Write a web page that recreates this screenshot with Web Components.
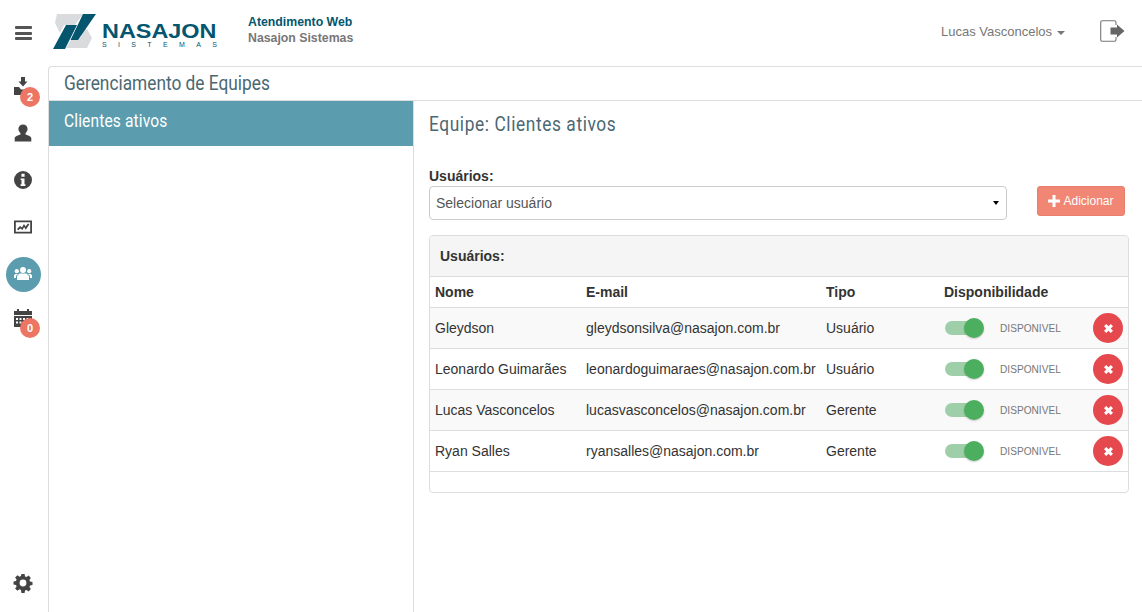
<!DOCTYPE html>
<html lang="pt-BR">
<head>
<meta charset="utf-8">
<title>Gerenciamento de Equipes</title>
<style>
  html, body { margin: 0; height: 100%; background: #fff; overflow: hidden; }
  body { font: 14px "Liberation Sans", Arial, sans-serif; color: #333; }
</style>
</head>
<body>
<nx-app>
  <nx-header slot="header"></nx-header>
  <nx-sidebar slot="sidebar"></nx-sidebar>
  <nx-page slot="main" heading="Gerenciamento de Equipes">
    <nx-team-list slot="list"></nx-team-list>
    <nx-team-detail slot="detail" team="Clientes ativos">
      <nx-user-row name="Gleydson" email="gleydsonsilva@nasajon.com.br" kind="Usuário" odd></nx-user-row>
      <nx-user-row name="Leonardo Guimarães" email="leonardoguimaraes@nasajon.com.br" kind="Usuário"></nx-user-row>
      <nx-user-row name="Lucas Vasconcelos" email="lucasvasconcelos@nasajon.com.br" kind="Gerente" odd></nx-user-row>
      <nx-user-row name="Ryan Salles" email="ryansalles@nasajon.com.br" kind="Gerente"></nx-user-row>
    </nx-team-detail>
  </nx-page>
</nx-app>

<script>
// tiny helper so every element below reads the same
function shadow(el, html) {
  const root = el.attachShadow({ mode: 'open' });
  root.innerHTML = html;
  return root;
}

const ICONS = {
  import: '<path d="M7 -1h4v4.500h2.500L9 8.500 4.500 3.500H7z"/><path d="M0 9h5l2 2.500h4l2 0V17H0z"/>',
  user: '<circle cx="9" cy="5" r="4.600"/><path d="M6.500 9h5v1.600c2.400.9 5.800 1.800 5.800 3.600V17.600H.7v-3.400c0-1.800 3.400-2.700 5.800-3.600z"/>',
  info: '<path fill-rule="evenodd" d="M9 0a9 9 0 1 1 0 18A9 9 0 0 1 9 0zM7.400 2.800v3h3.200v-3zM6.600 7.400v1.600h.9v4.200h-.9v1.900h4.800v-1.900h-.9V7.400z"/>',
  chart: '<path fill-rule="evenodd" d="M0 2.500h18v13H0zM1.800 4.300v9.400h14.400V4.300z"/><path d="M3 11l3-3 2 1.500 2-3.500 1.500 2.500L14 5.500l1.300.8-3.500 5.500-1.700-2.700-1.600 2.900-2.200-1.600-2 1.900z"/>',
  group: '<circle cx="10" cy="5" r="3"/><path d="M6.500 8.500h7l2.500 2.500v4H4v-4z"/><circle cx="3.800" cy="6.200" r="2.100"/><circle cx="16.200" cy="6.200" r="2.100"/><path d="M1 13V10.200l1.300-1.300h2.700L3 10.700V13zM19 13V10.200l-1.300-1.300H15l2 1.800V13z"/>',
  calendar: '<path fill-rule="evenodd" d="M3 0h2v2h8V0h2v2h3v4H0V2h3zM0 7h18v11H0zM2 9v2h2V9zm3.500 0v2h2V9zm3.500 0v2h2V9zm3.500 0v2h2V9zM2 12.500v2h2v-2zm3.500 0v2h2v-2zm3.500 0v2h2v-2zm3.500 0v2h2v-2z"/>',
  gear: '<path fill-rule="evenodd" d="M7.400 0h3.200l.4 2.500 1.500.6 2.100-1.500 2.300 2.300-1.500 2.100.6 1.500 2.500.4v3.200l-2.500.4-.6 1.500 1.500 2.100-2.300 2.300-2.100-1.500-1.500.6-.4 2.500H7.400L7 15.900l-1.500-.6-2.100 1.500-2.300-2.300 1.500-2.100-.6-1.500L-.5 10.500V7.500L2 7.100l.6-1.500-1.500-2.100 2.300-2.300 2.100 1.500L7 2.100zM9 5.600a3.400 3.400 0 1 0 0 6.800 3.400 3.400 0 0 0 0-6.800z"/>'
};

class NxApp extends HTMLElement {
  constructor() {
    super();
    shadow(this, `
      <style>
        :host { display: grid; grid-template-columns: 48px 1fr; grid-template-rows: 66px 1fr; height: 612px; }
        .head { grid-column: 1 / 3; }
      </style>
      <div class="head"><slot name="header"></slot></div>
      <slot name="sidebar"></slot>
      <slot name="main"></slot>`);
  }
}

class NxHeader extends HTMLElement {
  constructor() {
    super();
    shadow(this, `
      <style>
        :host { display: flex; align-items: center; height: 66px; box-sizing: border-box; background: #fff; }
        .burger { width: 17px; height: 14px; margin: 0 21px 0 15px; display: flex; flex-direction: column; justify-content: space-between; }
        .burger i { display: block; height: 3px; background: #555; border-radius: 1px; }
        .logo { display: flex; align-items: flex-start; width: 166px; height: 36px; margin-top: -2px; }
        .logo svg { flex: none; width: 47px; height: 36px; }
        .word { margin: 9px 0 0 2px; }
        .nasajon { display: block; font: bold 19.500px/17px "Liberation Sans", Arial, sans-serif; color: #04566f; transform: scaleX(1.2); transform-origin: 0 0; white-space: nowrap; }
        .sistemas { display: block; margin-top: 1px; font: 7px/8px "Liberation Sans", Arial, sans-serif; color: #04566f; letter-spacing: 11.350px; white-space: nowrap; }
        .titles { margin: -6px 0 0 29px; font-size: 12.300px; line-height: 16px; font-weight: bold; }
        .titles div:first-child { color: #04566f; }
        .titles div:last-child { color: #777; }
        .user { margin-left: auto; font-size: 13px; color: #777; display: flex; align-items: center; margin-top: -3px; }
        .caret { width: 0; height: 0; border: 4px solid transparent; border-top-color: #777; border-bottom: 0; margin-left: 5px; margin-top: 2px; }
        .exit { width: 26px; height: 23px; margin: -3px 16px 0 35px; }
      </style>
      <div class="burger"><i></i><i></i><i></i></div>
      <div class="logo">
        <svg viewBox="0 0 47 36">
          <path fill="#d9dbdc" d="M4 0H30L22 11H11L7 19 2 9z"/>
          <path fill="#d9dbdc" d="M34 15L39 24 34 34H13L19 24H27L31 15z"/>
          <path fill="#04566f" d="M0 35H12L24 11H13zM30 0H43L25 26H17.500z"/>
        </svg>
        <div class="word"><span class="nasajon">NASAJON</span><span class="sistemas">SISTEMAS</span></div>
      </div>
      <div class="titles"><div>Atendimento Web</div><div>Nasajon Sistemas</div></div>
      <div class="user">Lucas Vasconcelos<span class="caret"></span></div>
      <svg class="exit" viewBox="0 0 26 23">
        <path fill="none" stroke="#777" stroke-width="1.100" d="M16 5V2.500A1.800 1.800 0 0 0 14.200.7H2.500A1.800 1.800 0 0 0 .7 2.500v17a1.800 1.800 0 0 0 1.800 1.800h11.700a1.800 1.800 0 0 0 1.800-1.800V17"/>
        <path fill="#666" d="M10.500 7.500h6.500V4.500L24.500 11 17 17.500V14.500h-6.500z"/>
      </svg>`);
  }
}

class NxNavItem extends HTMLElement {
  constructor() {
    super();
    const badge = this.getAttribute('badge');
    shadow(this, `
      <style>
        :host { display: flex; align-items: center; justify-content: center; position: relative; width: 46px; height: 46px; }
        svg { display: block; width: 18px; height: 18px; fill: #444; overflow: visible; }
        :host([active]) .dot { width: 35px; height: 35px; border-radius: 50%; background: #5b9cae; display: flex; align-items: center; justify-content: center; }
        :host([active]) svg { fill: #fff; width: 20px; height: 18px; }
        .badge { position: absolute; left: 20px; top: 23px; width: 20px; height: 20px; border-radius: 50%; background: #ec7663; color: #fff; font: bold 11px/20px "Liberation Sans", Arial, sans-serif; text-align: center; }
      </style>
      <div class="dot"><svg viewBox="0 0 ${this.hasAttribute('active') ? '20' : '18'} 18">${ICONS[this.getAttribute('icon')]}</svg></div>
      ${badge !== null ? `<span class="badge">${badge}</span>` : ''}`);
  }
}

class NxSidebar extends HTMLElement {
  constructor() {
    super();
    shadow(this, `
      <style>
        :host { display: flex; flex-direction: column; height: 546px; }
        .items { display: flex; flex-direction: column; margin-top: -2px; }
        .gap { margin-top: 1px; }
        .up { margin-top: -2px; }
        .foot { margin-top: auto; margin-bottom: 6px; }
      </style>
      <div class="items">
        <nx-nav-item icon="import" badge="2"></nx-nav-item>
        <nx-nav-item icon="user"></nx-nav-item>
        <nx-nav-item class="gap" icon="info"></nx-nav-item>
        <nx-nav-item class="gap" icon="chart"></nx-nav-item>
        <nx-nav-item class="gap" icon="group" active></nx-nav-item>
        <nx-nav-item class="up" icon="calendar" badge="0"></nx-nav-item>
      </div>
      <nx-nav-item class="foot" icon="gear"></nx-nav-item>`);
  }
}

class NxPage extends HTMLElement {
  constructor() {
    super();
    shadow(this, `
      <style>
        :host { display: flex; flex-direction: column; height: 546px; box-sizing: border-box; border: 1px solid #ddd; border-width: 1px 0 0 1px; border-top-left-radius: 4px; }
        h1 { margin: 0; height: 34px; box-sizing: border-box; border-bottom: 1px solid #ddd; padding-left: 15px; font: 400 20px/33px Roboto, sans-serif; color: #4a6872; }
        h1 span { display: inline-block; transform: scaleX(.865); transform-origin: 0 50%; white-space: nowrap; }
        .body { flex: 1; display: grid; grid-template-columns: 365px 1fr; min-height: 0; }
      </style>
      <h1><span>${this.getAttribute('heading')}</span></h1>
      <div class="body"><slot name="list"></slot><slot name="detail"></slot></div>`);
  }
}

class NxTeamList extends HTMLElement {
  constructor() {
    super();
    shadow(this, `
      <style>
        :host { display: block; border-right: 1px solid #ddd; box-sizing: border-box; }
        div { height: 45px; background: #5b9cae; color: #fff; padding-left: 15px; font: 400 18px/40px Roboto, sans-serif; }
        span { display: inline-block; transform: scaleX(.865); transform-origin: 0 50%; white-space: nowrap; letter-spacing: .15px; }
      </style>
      <div><span>Clientes ativos</span></div>`);
  }
}

class NxTeamDetail extends HTMLElement {
  constructor() {
    super();
    shadow(this, `
      <style>
        :host { display: block; padding: 0 13px 0 15px; }
        h2 { margin: 0; height: 66px; font: 400 20px/46px Roboto, sans-serif; color: #4a6872; }
        h2 span { display: inline-block; transform: scaleX(.865); transform-origin: 0 50%; white-space: nowrap; letter-spacing: .7px; }
        label { display: block; font-weight: bold; font-size: 14px; line-height: 19px; color: #333; }
        .pick { display: flex; align-items: flex-start; gap: 30px; padding-right: 4px; }
        .select { flex: 1; height: 34px; box-sizing: border-box; border: 1px solid #ccc; border-radius: 4px; padding-left: 6px; display: flex; align-items: center; color: #555; font-size: 14px; }
        .select i { margin-left: auto; margin-right: 7px; width: 0; height: 0; border: 3.500px solid transparent; border-top: 4px solid #000; border-bottom: 0; }
        .add { width: 88px; height: 30px; box-sizing: border-box; border: 1px solid #e87e6c; border-radius: 3px; background: #f08673; color: #fff; font-size: 12px; display: flex; align-items: center; justify-content: center; gap: 3px; }
        .add svg { width: 12px; height: 12px; fill: #fff; }
        .panel { margin-top: 15px; border: 1px solid #ddd; border-radius: 4px; height: 258px; box-sizing: border-box; }
        .title { height: 41px; box-sizing: border-box; background: #f5f5f5; border-bottom: 1px solid #ddd; border-radius: 3px 3px 0 0; padding-left: 10px; font-weight: bold; line-height: 40px; }
        .cols { display: grid; grid-template-columns: 151px 240px 118px 1fr; height: 31px; box-sizing: border-box; border-bottom: 1px solid #ddd; padding-left: 5px; font-weight: bold; line-height: 30px; }
      </style>
      <h2><span>Equipe: ${this.getAttribute('team')}</span></h2>
      <label>Usuários:</label>
      <div class="pick">
        <div class="select">Selecionar usuário<i></i></div>
        <div class="add"><svg viewBox="0 0 12 12"><path d="M4.500 0h3v4.500H12v3H7.500V12h-3V7.500H0v-3h4.500z"/></svg>Adicionar</div>
      </div>
      <div class="panel">
        <div class="title">Usuários:</div>
        <div class="cols"><span>Nome</span><span>E-mail</span><span>Tipo</span><span>Disponibilidade</span></div>
        <slot></slot>
      </div>`);
  }
}

class NxToggle extends HTMLElement {
  constructor() {
    super();
    shadow(this, `
      <style>
        :host { display: block; position: relative; width: 40px; height: 14px; }
        .track { width: 36px; height: 14px; margin-left: 1px; border-radius: 7px; background: #9fcfa8; }
        .thumb { position: absolute; right: 0; top: -3px; width: 20px; height: 20px; border-radius: 50%; background: #4caf60; box-shadow: 0 1px 2px rgba(0,0,0,.2); }
      </style>
      <div class="track"></div><div class="thumb"></div>`);
  }
}

class NxUserRow extends HTMLElement {
  constructor() {
    super();
    shadow(this, `
      <style>
        :host { display: grid; grid-template-columns: 151px 240px 118px 56px 93px 30px; align-items: center; height: 41px; box-sizing: border-box; border-bottom: 1px solid #ddd; padding-left: 5px; color: #333; background: #fff; }
        :host([odd]) { background: #f9f9f9; }
        .state { font-size: 10.150px; color: #777; padding-top: 1px; }
        .del { width: 30px; height: 30px; border-radius: 50%; background: #e5484d; display: flex; align-items: center; justify-content: center; }
        .del svg { width: 9px; height: 9px; fill: #fff; }
      </style>
      <span>${this.getAttribute('name')}</span>
      <span>${this.getAttribute('email')}</span>
      <span>${this.getAttribute('kind')}</span>
      <nx-toggle></nx-toggle>
      <span class="state">DISPONIVEL</span>
      <div class="del"><svg viewBox="0 0 9 9"><path d="M2.200 0L4.500 2.300 6.800 0 9 2.200 6.700 4.500 9 6.800 6.800 9 4.500 6.700 2.200 9 0 6.800 2.300 4.500 0 2.200z"/></svg></div>`);
  }
}

customElements.define('nx-app', NxApp);
customElements.define('nx-header', NxHeader);
customElements.define('nx-nav-item', NxNavItem);
customElements.define('nx-sidebar', NxSidebar);
customElements.define('nx-page', NxPage);
customElements.define('nx-team-list', NxTeamList);
customElements.define('nx-team-detail', NxTeamDetail);
customElements.define('nx-toggle', NxToggle);
customElements.define('nx-user-row', NxUserRow);
</script>
</body>
</html>
